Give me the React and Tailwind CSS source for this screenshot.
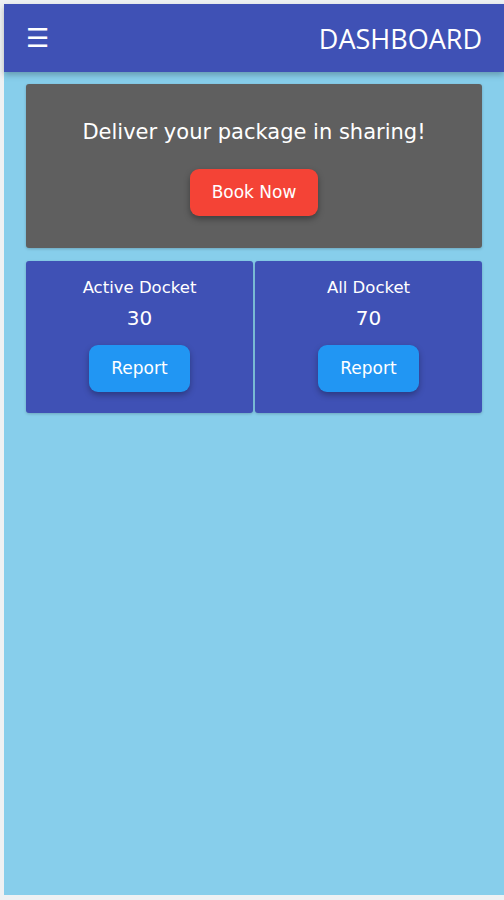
export default function App() {
  const dockets = [
    { label: 'Active Docket', count: 30 },
    { label: 'All Docket', count: 70 },
  ];

  return (
    <div className="h-[900px] bg-[#eef1f3] pt-1 pl-1 pb-[5px] overflow-hidden">
      <div className="h-full bg-[#87ceeb] flex flex-col">
        {/* Header */}
        <div className="h-[68px] bg-[#3f51b5] flex items-center justify-between pl-[22px] pr-[22px] shadow-[0_3px_6px_rgba(0,0,0,0.25)] relative z-10">
          <span className="text-white text-[26px] leading-none" style={{ fontFamily: '"DejaVu Sans", sans-serif' }}>☰</span>
          <span className="text-white text-[27px] leading-none" style={{ fontFamily: '"Open Sans", sans-serif' }}>DASHBOARD</span>
        </div>

        <div className="px-[22px] pt-3" style={{ fontFamily: '"DejaVu Sans", sans-serif' }}>
          {/* Promo */}
          <div className="h-[164px] bg-[#5f5f5f] rounded-[3px] flex flex-col items-center pt-[35px] shadow-[0_1px_3px_rgba(0,0,0,0.2)]">
            <p className="text-white text-[21px] leading-[26px]">Deliver your package in sharing!</p>
            <button className="mt-[24px] w-[128px] h-[47px] bg-[#f44336] text-white text-[17px] rounded-[9px] shadow-[0_3px_6px_rgba(0,0,0,0.35)]">
              Book Now
            </button>
          </div>

          {/* Dockets */}
          <div className="mt-[13px] grid grid-cols-2 gap-[2px]">
            {dockets.map((d) => (
              <div key={d.label} className="h-[152px] bg-[#3f51b5] rounded-[3px] flex flex-col items-center pt-[17px] shadow-[0_1px_3px_rgba(0,0,0,0.2)]">
                <p className="text-white text-[16.5px] leading-5">{d.label}</p>
                <p className="text-white text-[20px] leading-6 mt-[8px]">{d.count}</p>
                <button className="mt-[15px] w-[101px] h-[47px] bg-[#2196f3] text-white text-[17px] rounded-[9px] shadow-[0_3px_6px_rgba(0,0,0,0.3)]">
                  Report
                </button>
              </div>
            ))}
          </div>
        </div>
      </div>
    </div>
  );
}
